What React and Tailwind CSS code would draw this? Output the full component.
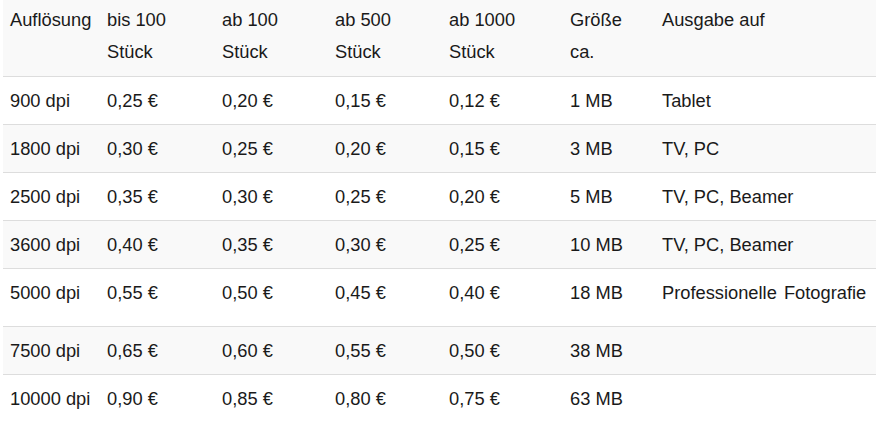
import React from "react";

const rows = [
  ["900 dpi", "0,25 €", "0,20 €", "0,15 €", "0,12 €", "1 MB", "Tablet"],
  ["1800 dpi", "0,30 €", "0,25 €", "0,20 €", "0,15 €", "3 MB", "TV, PC"],
  ["2500 dpi", "0,35 €", "0,30 €", "0,25 €", "0,20 €", "5 MB", "TV, PC, Beamer"],
  ["3600 dpi", "0,40 €", "0,35 €", "0,30 €", "0,25 €", "10 MB", "TV, PC, Beamer"],
  ["5000 dpi", "0,55 €", "0,50 €", "0,45 €", "0,40 €", "18 MB", "Professionelle Fotografie"],
  ["7500 dpi", "0,65 €", "0,60 €", "0,55 €", "0,50 €", "38 MB", ""],
  ["10000 dpi", "0,90 €", "0,85 €", "0,80 €", "0,75 €", "63 MB", ""],
];

const widths = ["w-[97px]", "w-[115px]", "w-[113px]", "w-[114px]", "w-[121px]", "w-[92px]", "w-[240px]"];

export default function App() {
  return (
    <div className="w-[876px] h-[431px] overflow-hidden bg-white">
      <table
        className="ml-[3px] w-[892px] table-fixed border-collapse text-[18.3px] leading-[32px] text-[#1a1a1a]"
        style={{ fontFamily: '"Liberation Sans", Arial, sans-serif' }}
      >
        <colgroup>
          {widths.map((w, i) => (
            <col key={i} className={w} />
          ))}
        </colgroup>
        <thead>
          <tr className="bg-[#f9f9f9] border-b border-[#dddddd]">
            <th className="pl-[7px] pt-1 pb-2 text-left font-normal align-top whitespace-nowrap">Auflösung</th>
            <th className="pl-[7px] pt-1 pb-2 text-left font-normal align-top">bis 100<br />Stück</th>
            <th className="pl-[7px] pt-1 pb-2 text-left font-normal align-top">ab 100<br />Stück</th>
            <th className="pl-[7px] pt-1 pb-2 text-left font-normal align-top">ab 500<br />Stück</th>
            <th className="pl-[7px] pt-1 pb-2 text-left font-normal align-top">ab 1000<br />Stück</th>
            <th className="pl-[7px] pt-1 pb-2 text-left font-normal align-top">Größe<br />ca.</th>
            <th className="pl-[7px] pt-1 pb-2 text-left font-normal align-top whitespace-nowrap">Ausgabe auf</th>
          </tr>
        </thead>
        <tbody>
          {rows.map((r, i) => (
            <tr
              key={i}
              className={
                (i % 2 === 1 ? "bg-[#f9f9f9] " : "bg-white ") +
                (i < rows.length - 1 ? "border-b border-[#dddddd]" : "")
              }
            >
              {r.map((c, j) => (
                <td
                  key={j}
                  className={
                    "pl-[7px] pt-2 align-top whitespace-nowrap " +
                    (i === 4 ? "pb-[17px] " : "pb-[7px] ") +
                    (j === 6 && i === 4 ? "[word-spacing:2px]" : "")
                  }
                >
                  {c}
                </td>
              ))}
            </tr>
          ))}
        </tbody>
      </table>
    </div>
  );
}
